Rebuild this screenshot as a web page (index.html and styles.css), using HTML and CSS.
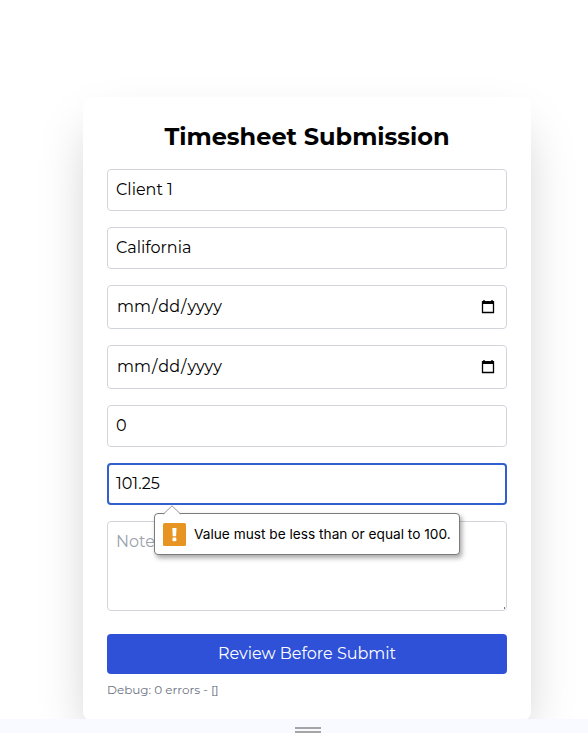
FILE: index.html
```html
<!DOCTYPE html>
<html lang="en">
<head>
<meta charset="utf-8">
<title>Timesheet Submission</title>
<link rel="stylesheet" href="styles.css">
</head>
<body>
<main class="page">
  <form class="card">
    <h1 class="title">Timesheet Submission</h1>
    <div class="field"><span>Client 1</span></div>
    <div class="field"><span>California</span></div>
    <div class="field date"><div class="parts"><span>mm</span>/<span>dd</span>/<span>yyyy</span></div>
      <svg class="cal" viewBox="0 0 14 16"><path d="M3 1v2M11 1v2" stroke="#000" stroke-width="1.4"/><path d="M1.5 3h11v10.5h-11z" fill="none" stroke="#000" stroke-width="1.3"/><path d="M1 2.2h12v2.8H1z"/></svg>
    </div>
    <div class="field date"><div class="parts"><span>mm</span>/<span>dd</span>/<span>yyyy</span></div>
      <svg class="cal" viewBox="0 0 14 16"><path d="M3 1v2M11 1v2" stroke="#000" stroke-width="1.4"/><path d="M1.5 3h11v10.5h-11z" fill="none" stroke="#000" stroke-width="1.3"/><path d="M1 2.2h12v2.8H1z"/></svg>
    </div>
    <div class="field"><span>0</span></div>
    <div class="field focused"><span>101.25</span>
      <div class="tooltip" role="alert">
        <svg class="arrow" viewBox="0 0 18 10"><path d="M0 10L9 1l9 9z" fill="#fff"/><path d="M.5 9L9 .8 17.5 9" fill="none" stroke="#999"/></svg>
        <svg class="warn" viewBox="0 0 23 23"><rect width="23" height="23" rx="1.5" fill="#e79423"/><path d="M9.3 5h4.2l-.4 8.2H9.7z" fill="#fff"/><rect x="9.4" y="14.6" width="4" height="3.6" rx="1.3" fill="#fff"/></svg>
        <span class="message">Value must be less than or equal to 100.</span>
      </div>
    </div>
    <div class="field notes"><span>Notes</span><i class="grip"></i></div>
    <button class="submit" type="button">Review Before Submit</button>
    <p class="debug">Debug: 0 errors - []</p>
  </form>
</main>
<footer class="drawer"><i class="handle"></i></footer>
</body>
</html>
```
FILE: styles.css
```css
* { box-sizing: border-box; }
body {
  margin: 0;
  height: 733px;
  overflow: hidden;
  display: flex;
  flex-direction: column;
  background: #fff;
  color: #000;
  font-family: Montserrat, Inter, sans-serif;
  font-size: 16px;
}
.page { height: 719px; padding: 97px 57px 0 83px; overflow: hidden; }
.card {
  height: 623px;
  padding: 24px;
  border-radius: 8px;
  background: #fff;
  box-shadow: 0 25px 50px -12px rgba(0, 0, 0, .25);
}
.title { margin: 0 0 16px; height: 32px; line-height: 32px; font-size: 24px; font-weight: 700; text-align: center; white-space: nowrap; }
.field {
  position: relative;
  display: flex;
  align-items: center;
  height: 42px;
  margin-bottom: 16px;
  padding: 0 8px;
  border: 1px solid #d1d5db;
  border-radius: 4px;
  line-height: 24px;
}
.date { height: 44px; padding: 0 11px 0 8px; justify-content: space-between; }
.parts span { display: inline-block; padding: 0 1px; }
.cal { width: 14px; height: 16px; margin-bottom: 1px; }
.focused { border: 2px solid #315fce; padding: 0 7px; }
.notes { height: 90px; align-items: flex-start; padding-top: 8px; margin-bottom: 23px; color: #9ca3af; }
.grip { position: absolute; right: 1px; bottom: 1px; width: 1px; height: 2px; background: #777; }
.tooltip {
  position: absolute;
  z-index: 2;
  left: 45px;
  top: 48px;
  width: 306px;
  height: 42px;
  display: flex;
  align-items: center;
  gap: 8px;
  padding: 0 8px;
  border: 1px solid #7b7b7b;
  border-radius: 4px;
  background: #fff;
  box-shadow: 2px 3px 5px rgba(0, 0, 0, .35);
  color: #000;
}
.arrow { position: absolute; left: 8px; top: -9px; width: 18px; height: 10px; }
.warn { width: 23px; height: 23px; flex: none; }
.message { font: 13.7px/20px Inter, sans-serif; white-space: nowrap; }
.submit {
  display: block;
  width: 100%;
  height: 40px;
  margin: 0 0 8px;
  padding: 0;
  border: 0;
  border-radius: 4px;
  background: #2e51d7;
  color: #fff;
  font: inherit;
  line-height: 38px;
}
.debug { margin: 0; font-size: 12px; line-height: 16px; color: #6b7280; }
.drawer { height: 14px; background: #f8faff; display: flex; justify-content: center; padding: 8px 0 0 28px; }
.handle { width: 26px; height: 6px; border-top: 2px solid #a5a5a5; border-bottom: 2px solid #a5a5a5; }
```
